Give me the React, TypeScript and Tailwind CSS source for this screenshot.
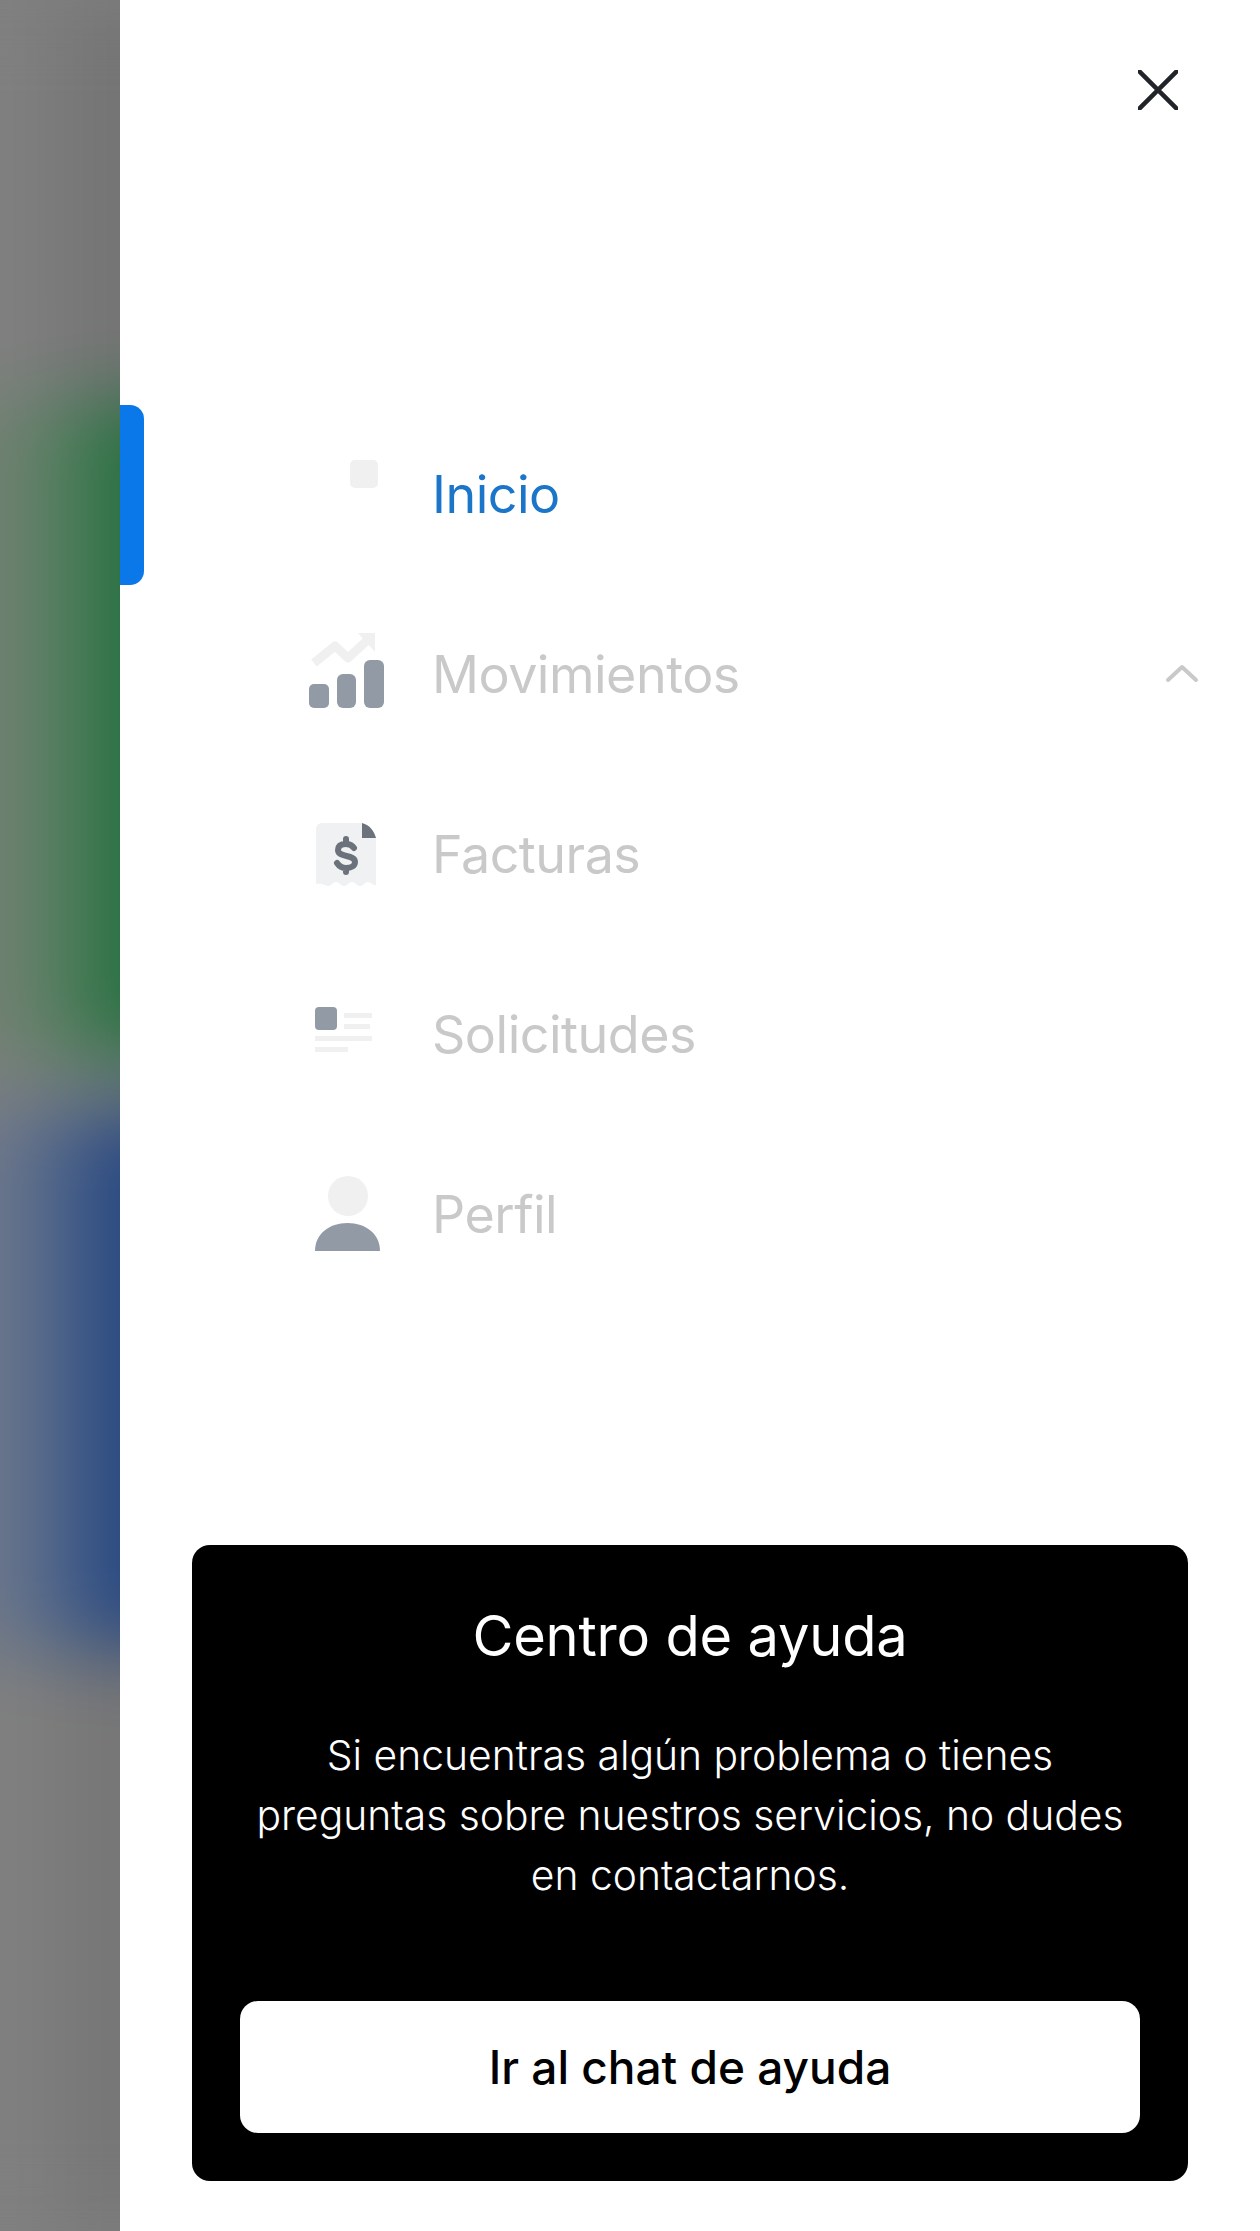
import type { ReactNode } from 'react'

function CloseIcon() {
  return (
    <svg width="40" height="40" viewBox="0 0 40 40" fill="none" stroke="#212529" strokeWidth="4.5" strokeLinecap="round">
      <path d="M1 1 39 39M39 1 1 39" />
    </svg>
  )
}

function Slot({ children }: { children: ReactNode }) {
  return (
    <svg width="100" height="90" viewBox="0 0 100 90" className="ml-[156px] shrink-0">
      {children}
    </svg>
  )
}

function InicioIcon() {
  return (
    <Slot>
      <rect x="50" y="10" width="28" height="28" rx="5" fill="#f0f0f0" />
    </Slot>
  )
}

function MovimientosIcon() {
  return (
    <Slot>
      <path d="M14 33 35 16 48 28 72 6" fill="none" stroke="#f0f0f0" strokeWidth="9" strokeLinejoin="round" />
      <path d="M58 3h17v19z" fill="#f0f0f0" />
      <rect x="9" y="54" width="20" height="24" rx="5" fill="#929aa6" />
      <rect x="37" y="44" width="19" height="34" rx="6" fill="#929aa6" />
      <rect x="64" y="30" width="20" height="48" rx="6" fill="#929aa6" />
    </Slot>
  )
}

function FacturasIcon() {
  return (
    <Slot>
      <path
        d="M22 13H62V28H76V75C73 76 71 72 68 72S63 76 60 76 55 72 52 72 47 76 44 76 39 72 36 72 31 76 28 76 23 73 16 74V19A6 6 0 0 1 22 13Z"
        fill="#f0f1f3"
      />
      <path d="M62 13c8 2 12 8 14 15H62z" fill="#6b727c" />
      <path
        d="M54 38c-2-3-5-4-8-4-5 0-8 2-8 6 0 8 17 4 17 12 0 4-4 6-9 6-4 0-7-2-9-5M46 29v5M46 58v4"
        fill="none"
        stroke="#6b727c"
        strokeWidth="6"
        strokeLinecap="round"
      />
    </Slot>
  )
}

function SolicitudesIcon() {
  return (
    <Slot>
      <rect x="15" y="17" width="22" height="23" rx="4" fill="#929aa6" />
      <rect x="44" y="23" width="28" height="5" fill="#f0f0f0" />
      <rect x="44" y="34" width="26" height="5" fill="#f0f0f0" />
      <rect x="15" y="46" width="57" height="5" fill="#f0f0f0" />
      <rect x="15" y="57" width="33" height="5" fill="#f0f0f0" />
    </Slot>
  )
}

function PerfilIcon() {
  return (
    <Slot>
      <circle cx="48" cy="26" r="20" fill="#f0f0f0" />
      <path d="M15 81C15 64 29 53 47.5 53S80 64 80 81z" fill="#929aa6" />
    </Slot>
  )
}

const items = [
  { label: 'Inicio', icon: <InicioIcon />, active: true },
  { label: 'Movimientos', icon: <MovimientosIcon />, chevron: true },
  { label: 'Facturas', icon: <FacturasIcon /> },
  { label: 'Solicitudes', icon: <SolicitudesIcon /> },
  { label: 'Perfil', icon: <PerfilIcon /> },
]

function NavRow({ label, icon, active, chevron }: { label: string; icon: ReactNode; active?: boolean; chevron?: boolean }) {
  return (
    <div className="flex h-[180px] items-center">
      <div className={active ? 'h-[180px] w-6 self-start rounded-r-[14px] bg-[#0a78e8]' : 'w-6'} />
      {icon}
      <span
        className={
          active
            ? 'ml-[32px] text-[52px] tracking-[-0.5px] text-[#1b75c9]'
            : 'ml-[32px] text-[52px] tracking-[-0.5px] text-[#c9c9c9]'
        }
      >
        {label}
      </span>
      {chevron && (
        <svg width="36" height="20" viewBox="0 0 36 20" fill="none" stroke="#c9c9c9" strokeWidth="4" strokeLinecap="round" strokeLinejoin="round" className="mb-[5px] ml-auto mr-[60px]">
          <path d="M4 17 18 4l14 13" />
        </svg>
      )}
    </div>
  )
}

function BlurredPage() {
  return (
    <div className="h-full w-[120px] shrink-0 overflow-hidden bg-[#808080]">
      <div className="ml-[-100px] flex h-full w-[320px] flex-col blur-[38px]">
        <div className="h-[400px] shrink-0 bg-gradient-to-r from-[#808080] from-40% to-[#747474] to-60%" />
        <div className="h-[660px] shrink-0 bg-gradient-to-r from-[#748074] from-30% via-[#558060] via-50% to-[#246f40] to-70%" />
        <div className="h-[50px] shrink-0 bg-[#808080]" />
        <div className="h-[540px] shrink-0 bg-gradient-to-r from-[#70798a] from-30% via-[#4c648a] via-50% to-[#264680] to-70%" />
        <div className="flex-1 bg-gradient-to-r from-[#808080] from-40% to-[#767676] to-60%" />
      </div>
    </div>
  )
}

export default function App() {
  return (
    <div className="flex h-[2231px] w-[1260px] overflow-hidden bg-white font-['Inter',sans-serif]">
      <BlurredPage />
      <div className="min-w-0 flex-1">
        <div className="flex h-[405px] justify-end pr-[82px] pt-[70px]">
          <div>
            <CloseIcon />
          </div>
        </div>
        {items.map((it) => (
          <NavRow key={it.label} {...it} />
        ))}
        <div className="ml-[72px] mt-[240px] flex h-[636px] w-[996px] flex-col items-center rounded-[18px] bg-black px-12 pb-[48px] pt-[56px] text-white">
          <div className="text-[56px] leading-[70px] tracking-[-0.2px]">Centro de ayuda</div>
          <div className="mt-[54px] w-full text-center text-[40.8px] font-light leading-[60px]">
            Si encuentras algún problema o tienes
            <br />
            preguntas sobre nuestros servicios, no dudes
            <br />
            en contactarnos.
          </div>
          <button className="mt-auto flex h-[132px] w-full items-center justify-center rounded-[18px] bg-white text-[46px] font-medium text-black">
            Ir al chat de ayuda
          </button>
        </div>
      </div>
    </div>
  )
}
